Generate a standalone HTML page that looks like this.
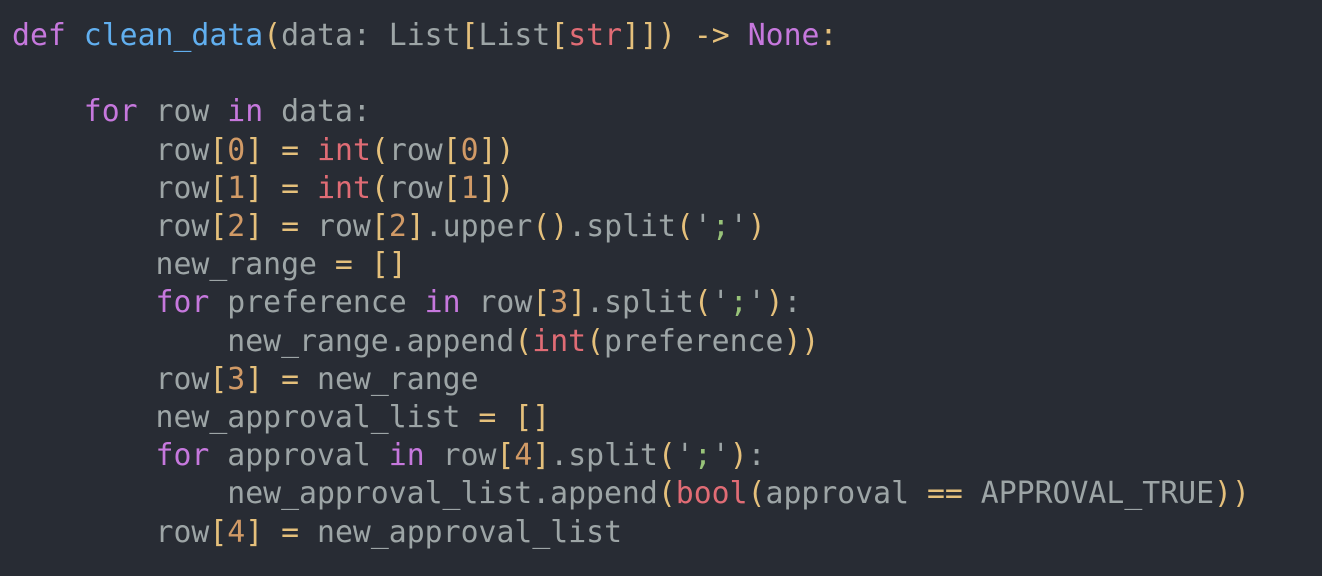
<!DOCTYPE html>
<html><head><meta charset="utf-8"><style>
html,body{margin:0;padding:0;background:#282c34;width:1322px;height:576px;overflow:hidden}
pre{margin:0;position:absolute;left:12px;top:17px;font-family:"DejaVu Sans Mono","Liberation Mono",monospace;font-size:29.8px;line-height:38.2px;color:#9da5a6}
.k{color:#c678dd}.f{color:#61afef}.y{color:#e5c07b}.n{color:#d19a66}.r{color:#e06c75}.g{color:#98c379}
</style></head><body><pre><span class="k">def</span> <span class="f">clean_data</span><span class="y">(</span>data: List<span class="y">[</span>List<span class="y">[</span><span class="r">str</span><span class="y">]]</span><span class="y">)</span> <span class="y">-&gt;</span> <span class="k">None</span><span class="y">:</span>

    <span class="k">for</span> row <span class="k">in</span> data:
        row<span class="y">[</span><span class="n">0</span><span class="y">]</span> <span class="y">=</span> <span class="r">int</span><span class="y">(</span>row<span class="y">[</span><span class="n">0</span><span class="y">])</span>
        row<span class="y">[</span><span class="n">1</span><span class="y">]</span> <span class="y">=</span> <span class="r">int</span><span class="y">(</span>row<span class="y">[</span><span class="n">1</span><span class="y">])</span>
        row<span class="y">[</span><span class="n">2</span><span class="y">]</span> <span class="y">=</span> row<span class="y">[</span><span class="n">2</span><span class="y">]</span>.upper<span class="y">()</span>.split<span class="y">(</span>'<span class="g">;</span>'<span class="y">)</span>
        new_range <span class="y">=</span> <span class="y">[]</span>
        <span class="k">for</span> preference <span class="k">in</span> row<span class="y">[</span><span class="n">3</span><span class="y">]</span>.split<span class="y">(</span>'<span class="g">;</span>'<span class="y">)</span>:
            new_range.append<span class="y">(</span><span class="r">int</span><span class="y">(</span>preference<span class="y">))</span>
        row<span class="y">[</span><span class="n">3</span><span class="y">]</span> <span class="y">=</span> new_range
        new_approval_list <span class="y">=</span> <span class="y">[]</span>
        <span class="k">for</span> approval <span class="k">in</span> row<span class="y">[</span><span class="n">4</span><span class="y">]</span>.split<span class="y">(</span>'<span class="g">;</span>'<span class="y">)</span>:
            new_approval_list.append<span class="y">(</span><span class="r">bool</span><span class="y">(</span>approval <span class="y">==</span> APPROVAL_TRUE<span class="y">))</span>
        row<span class="y">[</span><span class="n">4</span><span class="y">]</span> <span class="y">=</span> new_approval_list</pre></body></html>
